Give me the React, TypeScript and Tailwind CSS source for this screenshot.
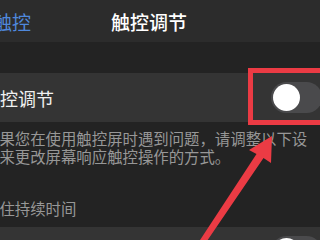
import React from "react";

function Toggle() {
  return (
    <div className="w-[51px] h-[31px] rounded-full bg-[#4a4a4c] flex items-center pl-[2px] shrink-0">
      <div className="w-[27px] h-[27px] rounded-full bg-white" />
    </div>
  );
}

export default function App() {
  return (
    <div
      className="relative w-[320px] h-[240px] overflow-hidden bg-[#232323]"
      style={{ fontFamily: '"Noto Sans CJK SC", "Noto Sans", sans-serif' }}
    >
      {/* nav bar */}
      <div className="h-[42px] bg-[#2c2c2c] flex items-center whitespace-nowrap">
        <span className="ml-[-7px] text-[19px] leading-none text-[#4f88dc]">触控</span>
        <span className="ml-[80px] text-[19px] leading-none font-medium text-white">触控调节</span>
      </div>

      {/* cell */}
      <div className="mt-[31px] h-[49px] bg-[#343434] flex items-center justify-between">
        <span className="ml-[-18px] text-[18px] leading-none text-[#f0f0f0] whitespace-nowrap">触控调节</span>
        <div className="mr-[-2px]">
          <Toggle />
        </div>
      </div>

      {/* footer */}
      <div className="pt-[7px] ml-[-16px] text-[15.4px] leading-[18px] text-[#979797] whitespace-nowrap">
        <div>如果您在使用触控屏时遇到问题，请调整以下设</div>
        <div>置来更改屏幕响应触控操作的方式。</div>
      </div>

      {/* section header */}
      <div className="mt-[34px] ml-[-16px] text-[15.4px] leading-[18px] text-[#979797] whitespace-nowrap">
        按住持续时间
      </div>

      {/* second cell */}
      <div className="mt-[10px] h-[49px] bg-[#343434] flex items-center justify-between">
        <span className="ml-[-18px] text-[18px] leading-none text-[#f0f0f0] whitespace-nowrap">按住持续时间</span>
        <div className="mr-[-2px]">
          <Toggle />
        </div>
      </div>

      {/* red highlight box */}
      <div className="absolute left-[248px] top-[68px] w-[80px] h-[57px] border-[5px] border-[#eb3b44]" />

      {/* red arrow */}
      <svg className="absolute left-0 top-0" width="320" height="240" viewBox="0 0 320 240">
        <polygon
          points="272,136 271,163 263.5,158 199.5,252 194.5,248.5 256.5,154 249,150"
          fill="#eb3b44"
        />
      </svg>
    </div>
  );
}
